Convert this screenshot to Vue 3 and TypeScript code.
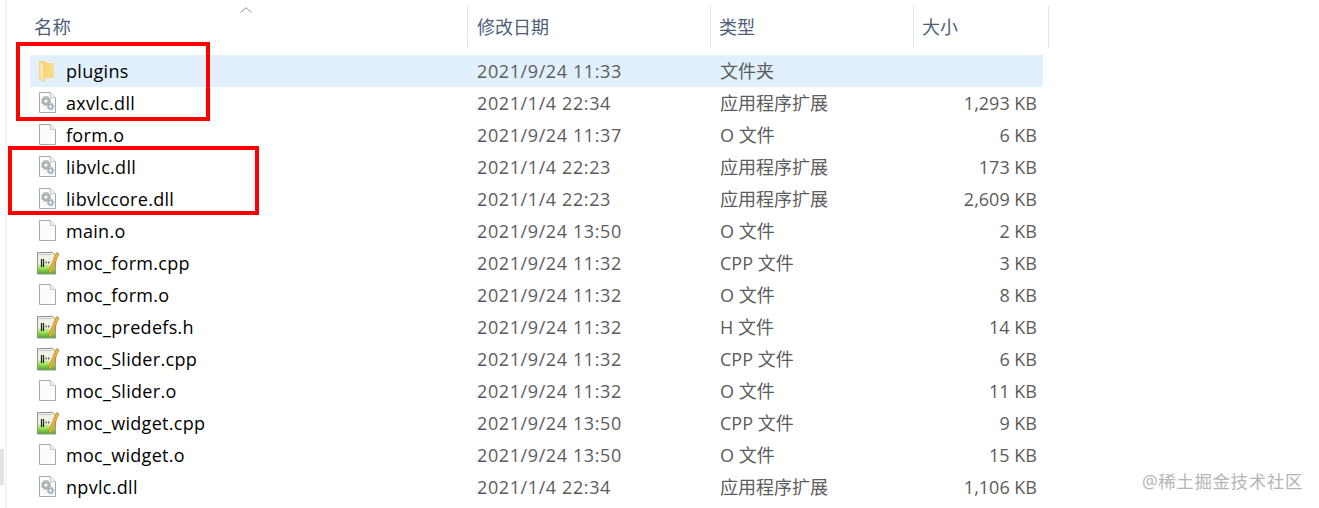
<template>
  <div class="explorer">
    <svg class="defs" width="0" height="0">
      <defs>
        <linearGradient id="cppFill" x1="0" y1="0" x2="0" y2="1">
          <stop offset="0.5" stop-color="#eef2e6" />
          <stop offset="0.72" stop-color="#a9dc5c" />
          <stop offset="1" stop-color="#3da82c" />
        </linearGradient>
        <linearGradient id="folderFill" x1="0" y1="0" x2="1" y2="0">
          <stop offset="0" stop-color="#f5cf6e" />
          <stop offset="1" stop-color="#fbdf8c" />
        </linearGradient>
        <g id="gear">
          <circle r="3" fill="none" stroke="#aeb3b7" stroke-width="3" />
          <circle r="4.300" fill="none" stroke="#aeb3b7" stroke-width="1.400" stroke-dasharray="1.700 1.700" />
        </g>
        <g id="gearSmall">
          <circle r="2.200" fill="#f2f5f7" stroke="#9fb0bb" stroke-width="1.600" />
          <circle r="3.500" fill="none" stroke="#a9b8c2" stroke-width="1.200" stroke-dasharray="1.400 1.400" />
        </g>
      </defs>
    </svg>

    <div class="page">
      <header class="head">
        <div class="col-name">名称</div>
        <div class="col-date">修改日期</div>
        <div class="col-type">类型</div>
        <div class="col-size">大小</div>
        <svg class="caret" width="12" height="6" viewBox="0 0 12 6">
          <path d="M.5 5.500 6 .7l5.500 4.800" fill="none" stroke="#8a8f94" stroke-width="1" />
        </svg>
      </header>

      <div
        v-for="file in files"
        :key="file.name"
        class="row"
        :class="{ selected: file.icon === 'folder' }"
      >
        <div class="name">
          <span class="slot">
            <svg v-if="file.icon === 'folder'" width="15" height="21" viewBox="0 0 15 21">
              <path d="M0 0h6.500l1.500 2h7v15H0z" fill="url(#folderFill)" />
              <path d="M0 0l5.500 2.500V21L0 18z" fill="#fae3a0" stroke="#e9c56c" stroke-width="0.600" />
            </svg>
            <svg v-else-if="file.icon === 'cpp'" class="cpp" width="24" height="24" viewBox="0 0 24 24">
              <path d="M2.500 1.500h15l3 3V23h-18z" fill="url(#cppFill)" stroke="#8f968c" />
              <path d="M3 3.500h14" stroke="#c9cec6" />
              <path d="M6.500 8v8M8.500 8v8" stroke="#22301a" stroke-width="1.300" />
              <path d="M10.500 11.500h5" stroke="#3a4a2a" stroke-width="1.300" stroke-dasharray="1.500 1" />
              <path d="M14 19.500 21.500 1.500 24 2.500 16.500 21l-2.500 1.500z" fill="#efb632" stroke="#b0701e" stroke-width="0.600" />
            </svg>
            <svg v-else class="doc" width="17" height="21" viewBox="0 0 17 21">
              <path d="M.5.500h11l5 5v15H.5z" fill="#fcfcfc" stroke="#a6a9ab" />
              <path d="M11.500.500v5h5" fill="#f0f1f2" stroke="#c6c8ca" />
              <template v-if="file.icon === 'dll'">
                <use href="#gear" x="7" y="9" />
                <use href="#gearSmall" x="11.500" y="14.500" />
              </template>
            </svg>
          </span>
          <span>{{ file.name }}</span>
        </div>
        <div class="date">{{ file.date }}</div>
        <div class="type">{{ file.type }}</div>
        <div class="size">{{ file.size }}</div>
      </div>
    </div>

    <div class="mark one"></div>
    <div class="mark two"></div>
    <div class="edge"></div>
    <div class="scroll"></div>
    <div class="watermark">@稀土掘金技术社区</div>
  </div>
</template>

<script setup lang="ts">
interface FileRow {
  name: string;
  date: string;
  type: string;
  size: string;
  icon: 'folder' | 'dll' | 'blank' | 'cpp';
}

const files: FileRow[] = [
  { name: 'plugins', date: '2021/9/24 11:33', type: '文件夹', size: '', icon: 'folder' },
  { name: 'axvlc.dll', date: '2021/1/4 22:34', type: '应用程序扩展', size: '1,293 KB', icon: 'dll' },
  { name: 'form.o', date: '2021/9/24 11:37', type: 'O 文件', size: '6 KB', icon: 'blank' },
  { name: 'libvlc.dll', date: '2021/1/4 22:23', type: '应用程序扩展', size: '173 KB', icon: 'dll' },
  { name: 'libvlccore.dll', date: '2021/1/4 22:23', type: '应用程序扩展', size: '2,609 KB', icon: 'dll' },
  { name: 'main.o', date: '2021/9/24 13:50', type: 'O 文件', size: '2 KB', icon: 'blank' },
  { name: 'moc_form.cpp', date: '2021/9/24 11:32', type: 'CPP 文件', size: '3 KB', icon: 'cpp' },
  { name: 'moc_form.o', date: '2021/9/24 11:32', type: 'O 文件', size: '8 KB', icon: 'blank' },
  { name: 'moc_predefs.h', date: '2021/9/24 11:32', type: 'H 文件', size: '14 KB', icon: 'cpp' },
  { name: 'moc_Slider.cpp', date: '2021/9/24 11:32', type: 'CPP 文件', size: '6 KB', icon: 'cpp' },
  { name: 'moc_Slider.o', date: '2021/9/24 11:32', type: 'O 文件', size: '11 KB', icon: 'blank' },
  { name: 'moc_widget.cpp', date: '2021/9/24 13:50', type: 'CPP 文件', size: '9 KB', icon: 'cpp' },
  { name: 'moc_widget.o', date: '2021/9/24 13:50', type: 'O 文件', size: '15 KB', icon: 'blank' },
  { name: 'npvlc.dll', date: '2021/1/4 22:34', type: '应用程序扩展', size: '1,106 KB', icon: 'dll' },
];
</script>

<style>
html,
body {
  margin: 0;
  background: #fff;
  overflow: hidden;
}
</style>

<style scoped>
.explorer {
  position: relative;
  width: 1319px;
  height: 508px;
  overflow: hidden;
  font-family: 'Open Sans', 'Noto Sans CJK SC', sans-serif;
  font-size: 18px;
  color: #000;
  background: #fff;
}

.defs {
  position: absolute;
}

.page {
  margin-left: 30px;
  padding-top: 6px;
  width: 1013px;
}

.head {
  position: relative;
  display: grid;
  grid-template-columns: 438px 243px 203px 135px;
  height: 40px;
  margin-bottom: 9px;
  color: #4c607a;
  line-height: 42px;
}

.head > div {
  padding-left: 8px;
  border-right: 1px solid #e5e5e5;
  box-sizing: border-box;
}

.head > .col-date {
  padding-left: 9px;
}

.head > .col-name {
  padding-left: 4px;
  font-size: 18.500px;
}

.caret {
  position: absolute;
  left: 210px;
  top: 1px;
}

.row {
  display: grid;
  grid-template-columns: 447px 243px 203px 114px;
  height: 32px;
  line-height: 32px;
  white-space: nowrap;
}

.row.selected {
  background: #e1f0fc;
}

.name {
  display: flex;
  align-items: center;
  padding-left: 9px;
  letter-spacing: 0.300px;
}

.slot {
  display: flex;
  align-items: center;
  flex: none;
  width: 27px;
}

.cpp {
  margin-left: -4px;
}

.doc {
  margin-top: -2px;
}

.date {
  letter-spacing: 0.600px;
}

.date,
.type,
.size {
  color: #5c5c5c;
}

.size {
  text-align: right;
}

.mark {
  position: absolute;
  box-sizing: border-box;
  border: 4px solid #f00;
}

.mark.one {
  left: 16px;
  top: 42px;
  width: 194px;
  height: 79px;
}

.mark.two {
  left: 8px;
  top: 146px;
  width: 251px;
  height: 69px;
}

.edge {
  position: absolute;
  left: 5px;
  top: 0;
  bottom: 0;
  width: 2px;
  background: #f6f6f6;
}

.scroll {
  position: absolute;
  left: 0;
  top: 449px;
  width: 4px;
  height: 36px;
  background: #e3e3e3;
}

.watermark {
  position: absolute;
  right: 16px;
  top: 469px;
  color: #b5b5b5;
  font-size: 17.500px;
  line-height: 24px;
  letter-spacing: 0.600px;
}
</style>
